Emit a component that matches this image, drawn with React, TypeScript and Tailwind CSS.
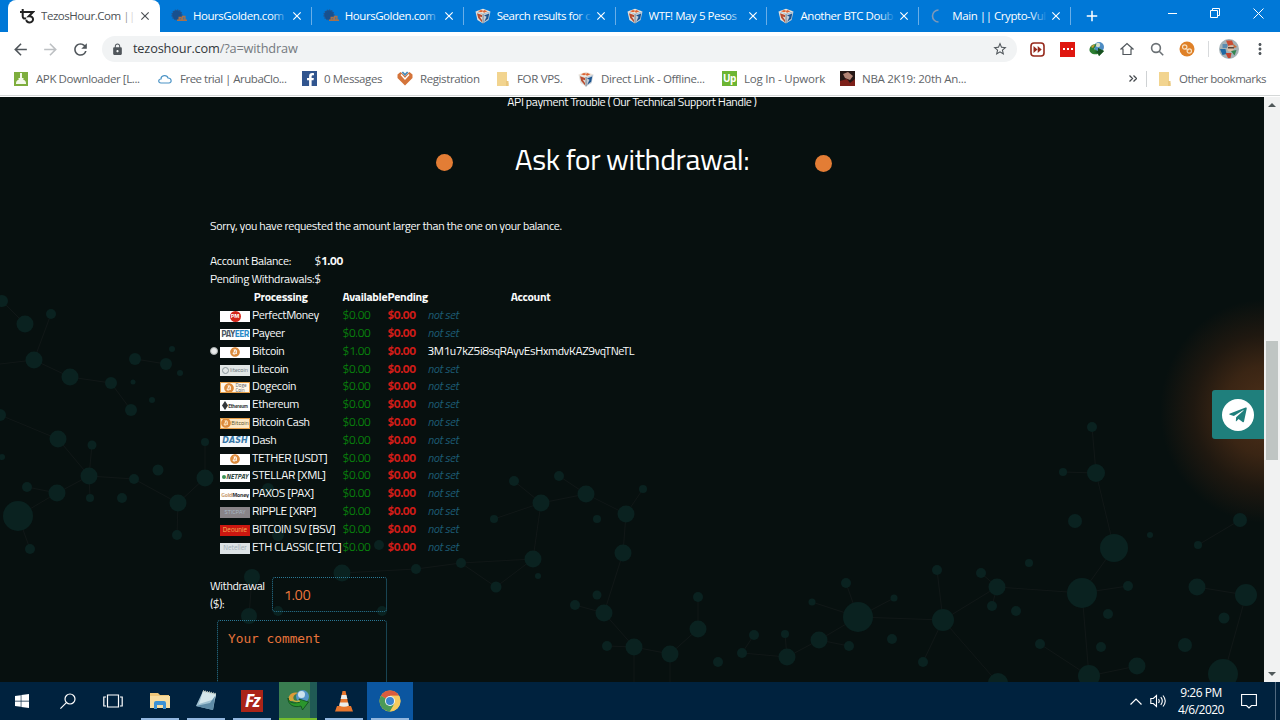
import React from 'react';
import { MdArrowBack, MdArrowForward, MdRefresh, MdLock, MdStarBorder, MdMoreVert, MdClose, MdAdd } from 'react-icons/md';
import { FaFacebookF, FaTelegramPlane, FaBitcoin, FaWindows } from 'react-icons/fa';

type TabKind = 'tezos' | 'golden' | 'cube' | 'spinner';

const tabs: { title: string; kind: TabKind }[] = [
  { title: 'TezosHour.Com ||', kind: 'tezos' },
  { title: 'HoursGolden.com', kind: 'golden' },
  { title: 'HoursGolden.com', kind: 'golden' },
  { title: 'Search results for c', kind: 'cube' },
  { title: 'WTF! May 5 Pesos', kind: 'cube' },
  { title: 'Another BTC Doub', kind: 'cube' },
  { title: 'Main || Crypto-Vul', kind: 'spinner' },
];

const CubeIcon = ({ size = 16 }: { size?: number }) => (
  <svg width={size} height={size} viewBox="0 0 16 16">
    <path d="M.5 3.5 8 .8l7.500 2.700L8 6z" fill="#efe4d8" />
    <path d="M3 3.2 6 2l3 1-3 1.300zM9 2l3.500 1.200L9 4.800 8 4z" fill="#dd6434" />
    <path d="M.5 3.5 8 6v9.5L2.4 12z" fill="#e2e0db" />
    <path d="M15.5 3.5 8 6v9.5l5.6-3.5z" fill="#c3ccd6" />
    <path d="M2 5.2 7 7.1v2.2L4.600 8.6 7 12v2.2L3.200 10z" fill="#b84c30" />
    <path d="m9 7.6 5.2-2.2-1 5.4-4 3 2.4-5z" fill="#1c5590" />
    <path d="M8 6v9.5" stroke="#3c4654" strokeWidth=".6" fill="none" />
  </svg>
);

const TabIcon = ({ kind }: { kind: TabKind }) => {
  if (kind === 'cube') return <CubeIcon />;
  if (kind === 'tezos') {
    return (
      <svg width="16" height="16" viewBox="0 0 16 16" fill="none" stroke="#222" strokeWidth="2">
        <path d="M1 4h5.5M3.7 1v7.3c0 2 1.4 2.6 3.3 1.8M6.5 4H14L9.8 8.2c5.6-.6 5.4 6.4.8 6.2-2 0-3.4-1.1-3.2-2.8" />
      </svg>
    );
  }
  if (kind === 'golden') {
    return (
      <svg width="16" height="16" viewBox="0 0 16 16">
        <circle cx="6" cy="7" r="4.8" fill="#17508f" stroke="#24538c" strokeWidth="1.6" strokeDasharray="1.2 1" />
        <path d="M8.2 12V9.5h2V12m1.5 0V8.5h2.2V12M6 12.3h10" stroke="#a8714a" strokeWidth="1.4" fill="none" />
      </svg>
    );
  }
  return (
    <svg width="16" height="16" viewBox="0 0 16 16" fill="none">
      <path d="M8.5 2a6 6 0 0 0 0 12" stroke="#7f99b8" strokeWidth="1.6" />
    </svg>
  );
};

const TabStrip = () => (
  <div className="flex h-8 bg-[#0078d7] pl-2 text-[11.5px]">
    {tabs.map((tab, i) => {
      const active = i === 0;
      return (
        <div
          key={i}
          className={`relative flex w-[151.9px] items-center pl-[11px] ${active ? 'rounded-t-lg bg-white text-[#4b5054]' : 'text-white'}`}
        >
          <TabIcon kind={tab.kind} />
          <div className="relative ml-[6px] w-[95px] overflow-hidden tracking-[-0.45px] whitespace-nowrap">
            {tab.title}
            <div className={`absolute top-0 right-0 h-full w-4 bg-linear-to-r ${active ? 'from-white/0 to-white' : 'from-[#0078d7]/0 to-[#0078d7]'}`} />
          </div>
          <MdClose size={14} className="ml-[2px]" />
          {!active && <div className="absolute right-0 h-[18px] w-px bg-[#69aee8]" />}
        </div>
      );
    })}
    <div className="flex w-[41px] items-center justify-center text-white">
      <MdAdd size={18} />
    </div>
    <div className="ml-auto flex pb-[5px] text-white">
      <div className="flex w-[43px] items-center justify-center"><div className="h-px w-[9px] bg-white" /></div>
      <div className="flex w-[43px] items-center justify-center">
        <svg width="11" height="11" viewBox="0 0 11 11" fill="none" stroke="currentColor">
          <path d="M.5 2.5h7v7h-7zM2.5 2.5v-2h7v7h-2" />
        </svg>
      </div>
      <div className="flex w-[43px] items-center justify-center">
        <svg width="11" height="11" viewBox="0 0 11 11" stroke="currentColor"><path d="m.5.5 10 10m0-10-10 10" /></svg>
      </div>
    </div>
  </div>
);

const Toolbar = () => (
  <div className="flex h-[34px] items-center bg-white pl-[11px] text-[#50565b]">
    <MdArrowBack size={19} />
    <MdArrowForward size={19} className="ml-[11px] text-[#bdc0c3]" />
    <MdRefresh size={19} className="ml-[11px]" />
    <div className="ml-[12px] flex h-[26px] w-[915px] items-center rounded-full bg-[#f1f3f4] pl-[9px] pr-[9px]">
      <MdLock size={13} />
      <div className="ml-[9px] text-[12.75px] tracking-[-0.17px] text-[#33383b]">
        tezoshour.com<span className="text-[#747a7f]">/?a=withdraw</span>
      </div>
      <MdStarBorder size={16} className="ml-auto" />
    </div>
    <div className="flex items-center">
      <svg width="15" height="15" viewBox="0 0 15 15" className="ml-[13px]">
        <rect x="1" y="1" width="13" height="13" rx="3" fill="#fff" stroke="#96291b" strokeWidth="1.6" />
        <path d="m3.5 4 4 3.5-4 3.5zM7.7 4l4 3.5-4 3.5z" fill="#96291b" />
      </svg>
      <div className="ml-[15px] flex h-[15px] w-[15px] items-center justify-center gap-[2px] bg-[#df1710]">
        <div className="h-[2px] w-[2px] bg-white" />
        <div className="h-[2px] w-[2px] bg-white" />
        <div className="h-[2px] w-[2px] bg-white" />
      </div>
      <svg width="16" height="16" viewBox="0 0 16 16" className="ml-[14px]">
        <circle cx="10" cy="6" r="5" fill="#4d8cc4" />
        <circle cx="9" cy="4" r="2.2" fill="#d3dfc9" />
        <path d="M.5 8C1 4 5 2.5 7.5 3.5L5 8l4 2V7l6 3-5 5-1-2C4 14 0 12 .5 8z" fill="#2c7f32" />
        <path d="m9 7 6 3-5 5-1-3-4-1 4-1z" fill="#174f20" />
        <path d="M2 6q1-2.5 4-2.5L4 7z" fill="#c99a35" />
      </svg>
      <svg width="14" height="14" viewBox="0 0 14 14" className="ml-[15px]" fill="none" stroke="currentColor" strokeWidth="1.2">
        <path d="M1 7 7 1.5 13 7h-2v5.5H3V7z" />
      </svg>
      <svg width="14" height="14" viewBox="0 0 14 14" className="ml-[16px]" fill="none" stroke="#6b7175" strokeWidth="1.6">
        <circle cx="6" cy="6" r="4.4" /><path d="m9.2 9.2 4 4" />
      </svg>
      <svg width="16" height="16" viewBox="0 0 16 16" className="ml-[15px]" fill="none" stroke="#f8dfbf" strokeWidth="1.2">
        <circle cx="8" cy="8" r="7.5" fill="#df8128" stroke="none" />
        <circle cx="5.7" cy="6" r="2.2" /><circle cx="10.3" cy="10" r="2.2" /><path d="m6 7.5 4 1.5" />
      </svg>
      <div className="ml-[13px] h-4 w-px bg-[#d8dadc]" />
      <svg width="20" height="20" viewBox="0 0 20 20" className="ml-[10px]">
        <circle cx="10" cy="10" r="10" fill="#a3b1b6" />
        <path d="M3.5 5h5v4h-5z" fill="#5a8bb0" /><path d="M7 1.5h6l1.5 4-5 2z" fill="#c94d33" />
        <path d="M1 10h5.5l1 5-4 1z" fill="#1e69a4" /><circle cx="11.5" cy="9.5" r="3.2" fill="#dcbfa5" />
        <path d="M6.5 14h6l-1 5H9z" fill="#c4432e" /><path d="m12 12 5.5-1-2 5.5z" fill="#338550" /><path d="M9 8h6v1.5H9z" fill="#554239" />
        <path d="M14 4.5 18 8l-3 1z" fill="#c96b3c" />
      </svg>
      <MdMoreVert size={18} className="ml-[12px]" />
    </div>
  </div>
);

const Folder = () => (
  <svg width="13" height="14" viewBox="0 0 13 14">
    <path d="M1 0h10v10l1.5 1v3H1z" fill="#f2d48f" /><path d="M10 9h2.5v5H10z" fill="#e9c67d" />
  </svg>
);

const bookmarks: { label: string; icon: React.ReactNode; at: string }[] = [
  {
    label: 'APK Downloader [L...',
    at: 'w-[144px] gap-[8px] tracking-[-0.4px]',
    icon: (
      <svg width="14" height="14" viewBox="0 0 14 14">
        <path d="M0 0h14v14H0z" fill="#7eae3d" /><path d="M6 1h2v5h2L7 9 4 6h2zM2 11a5 4 0 0 1 10 0v1H2z" fill="#f4f9ea" />
      </svg>
    ),
  },
  {
    label: 'Free trial | ArubaClo...',
    at: 'w-[144px] gap-[8px] tracking-[-0.5px]',
    icon: (
      <svg width="14" height="14" viewBox="0 0 14 14" fill="none" stroke="#4c94c6" strokeWidth="1.2">
        <path d="M3 11C0 11 0 7 3 7c0-4 6-4.5 7-1 4 0 4 5 1 5z" />
      </svg>
    ),
  },
  {
    label: '0 Messages',
    at: 'w-[95px] gap-[7px] tracking-[-0.37px]',
    icon: <div className="flex h-[15px] w-[15px] items-end justify-end bg-[#31558f]"><FaFacebookF size={13} className="text-white" /></div>,
  },
  {
    label: 'Registration',
    at: 'w-[99px] gap-[7px] tracking-[-0.4px]',
    icon: (
      <svg width="16" height="15" viewBox="0 0 16 15">
        <path d="M.5 3.5 3.5 1 8 5l4.500-4 3 2.5V7L8 14.5.5 7z" fill="#d4743a" />
        <path d="M4.500 1.500 6 .5l2 2 2-2 1.500 1L8 5z" fill="#4c8cb9" />
        <path d="m4 3.500 4 4.500 4-4.500" stroke="#fff" strokeWidth="1.400" fill="none" />
      </svg>
    ),
  },
  { label: 'FOR VPS.', icon: <Folder />, at: 'w-[82px] gap-[8px] tracking-[-0.33px]' },
  { label: 'Direct Link - Offline...', icon: <CubeIcon />, at: 'w-[144px] gap-[7px] tracking-[-0.34px]' },
  {
    label: 'Log In - Upwork',
    at: 'w-[118px] gap-[7px] tracking-[-0.2px]',
    icon: <div className="h-[15px] w-[15px] bg-[#6cb533] text-center text-[10px] leading-[14px] font-bold tracking-[-0.5px] text-white">Up</div>,
  },
  {
    label: 'NBA 2K19: 20th An...',
    at: 'w-[140px] gap-[7px] tracking-[-0.28px]',
    icon: (
      <svg width="15" height="15" viewBox="0 0 15 15">
        <path d="M0 0h15v15H0z" fill="#251715" /><path d="m3 3 5-2 5 4-3 4-5-2z" fill="#b28475" /><path d="m0 10 7-2 3 4 5-4v7H0z" fill="#7d2019" />
      </svg>
    ),
  },
];

const BookmarksBar = () => (
  <div className="flex h-[30px] items-center border-b border-[#d5d8d8] bg-white pb-[4px] pl-[14px] text-[11.5px] whitespace-nowrap text-[#5f6569]">
    {bookmarks.map(b => (
      <div key={b.label} className={`flex shrink-0 items-center ${b.at}`}>
        <div className="shrink-0">{b.icon}</div>
        <span>{b.label}</span>
      </div>
    ))}
    <svg width="8" height="7" viewBox="0 0 8 7" className="ml-auto" fill="none" stroke="#454a4e" strokeWidth="1.3"><path d="m.5.5 3 3-3 3m4-6 3 3-3 3" /></svg>
    <div className="ml-[9px] h-4 w-px bg-[#cfd2d4]" />
    <div className="ml-[11px]"><Folder /></div>
    <span className="mr-[13px] ml-[8px] w-[88px] tracking-[-0.5px]">Other bookmarks</span>
  </div>
);

// [x, y, radius], in page area coordinates
const nodes: [number, number, number][] = [
  [2, 204, 6], [25, 227, 8.5], [51, 217, 5], [34, 263, 8.5], [70, 280, 8.5], [111, 286, 6], [135, 262, 6], [166, 267, 6],
  [172, 252, 3], [180, 276, 3], [133, 285, 2.5], [131, 313, 6], [152, 303, 3], [0, 318, 6], [58, 342, 8.5], [92, 348, 4.5],
  [2, 360, 3], [27, 390, 5], [57, 396, 8.5], [89, 379, 8.5], [134, 382, 5], [158, 373, 5.5], [90, 401, 4], [122, 401, 5],
  [18, 419, 15], [30, 452, 5], [178, 406, 8.5], [177, 438, 5], [205, 381, 8.5], [205, 345, 4], [268, 392, 6], [278, 438, 6],
  [379, 448, 5], [252, 480, 8], [342, 476, 8.5], [249, 519, 8], [416, 472, 5], [278, 514, 5], [382, 514, 5],
  [514, 384, 5], [559, 379, 5], [541, 406, 8.5], [586, 397, 8.5], [494, 422, 4], [643, 392, 4], [626, 417, 8.5], [597, 422, 4],
  [623, 456, 8.5], [533, 462, 8.5], [538, 479, 3], [496, 490, 5.5], [461, 466, 5], [597, 498, 4.5], [575, 508, 5], [604, 516, 8.5],
  [698, 500, 5], [698, 532, 8.5], [607, 549, 5], [634, 550, 8.5], [670, 557, 8.5], [718, 565, 5], [742, 556, 5], [754, 538, 5],
  [785, 537, 4], [787, 560, 8.5], [819, 543, 8.5], [812, 505, 3.5], [858, 520, 15], [846, 486, 5], [894, 501, 3.5], [892, 542, 5],
  [849, 549, 5], [943, 523, 11], [937, 473, 5], [923, 565, 5], [981, 476, 5], [997, 490, 8.5], [992, 509, 5], [1016, 514, 5],
  [998, 586, 10], [1082, 496, 15], [1128, 489, 5], [1108, 517, 5], [1040, 547, 5], [1101, 550, 5], [1137, 569, 8.5], [1089, 579, 11],
  [1197, 490, 8.5], [1246, 498, 11], [1224, 521, 5.5], [1185, 548, 7], [1223, 577, 15], [1029, 466, 4], [1114, 451, 14],
  [1092, 330, 5], [1096, 376, 9], [1063, 375, 4], [1075, 424, 7], [1150, 438, 3], [1198, 448, 4], [1240, 423, 7],
];

const NetworkBackdrop = () => (
  <svg className="absolute inset-0" width="1264" height="585" viewBox="0 0 1264 585">
    <path
      d="M2 204 25 227M51 217 34 263 70 280 111 286 131 313M0 267 34 263M135 262 166 267M0 318 58 342 89 379 57 396 27 390M92 348 89 379 90 401M89 379 134 382 178 406 177 438M57 396 18 419 30 452M178 406 205 381V345M252 480 249 519M342 476 416 472 461 466 533 462 541 406 586 397 626 417 623 456 604 516 634 550 670 557 698 532V500M514 384 541 406 494 422M559 379 586 397M643 392 626 417M496 490 533 462M461 466 496 490M575 508 604 516M607 549 634 550V585M670 557V585M754 538 742 556 787 560 819 543 858 520 943 523 937 473M785 537 787 560M812 505 858 520 846 486M894 501 858 520M819 543 849 549M923 565 943 523 998 586M943 523 997 490 981 476M992 509 997 490 1082 496 1114 451 1096 376 1092 330M1063 375 1096 376M1128 489 1082 496 1089 579 1137 569M1040 547 1089 579M1197 490 1246 498 1224 577M1198 448 1240 423"
      fill="none"
      stroke="#171d1c"
      strokeWidth="0.6"
    />
    {nodes.map(([x, y, r], i) => <circle key={i} cx={x} cy={y} r={r} fill="#0a2220" />)}
  </svg>
);

const coin = <FaBitcoin size={10} className="shrink-0 text-[#dc8b3c]" />;

const methods: { name: string; badge: React.ReactNode; box: string; available?: string; account?: string }[] = [
  { name: 'PerfectMoney', box: 'bg-white', badge: <div className="h-[11px] w-[11px] rounded-full bg-[#d4261a] text-center text-[6px] leading-[10px] font-bold text-white">PM</div> },
  { name: 'Payeer', box: 'bg-white text-[9px] font-bold tracking-[-0.5px]', badge: <span className="text-[#4a5563]">PAY<span className="text-[#2789c8]">EER</span></span> },
  { name: 'Bitcoin', box: 'bg-white', badge: coin, available: '$1.00', account: '3M1u7kZ5i8sqRAyvEsHxmdvKAZ9vqTNeTL' },
  {
    name: 'Litecoin',
    box: 'bg-[#e1e6e5] gap-px text-[6px] text-[#727d82]',
    badge: <><div className="h-[7px] w-[7px] shrink-0 rounded-full border border-[#8a969a]" /><span>litecoin</span></>,
  },
  {
    name: 'Dogecoin',
    box: 'bg-[#fff6e9] border border-[#e7a04a] gap-[2px] text-[5px] text-[#62676b]',
    badge: <>{coin}<div className="flex flex-col leading-[5px]"><span>Doge</span><span>Coin</span></div></>,
  },
  { name: 'Ethereum', box: 'bg-white text-[5px] font-bold tracking-[-0.2px] text-[#393d40]', badge: <><svg width="6" height="9" viewBox="0 0 6 9"><path d="m3 0 3 4.5L3 9 0 4.5z" fill="#33373b" /></svg><span>Ethereum</span></> },
  { name: 'Bitcoin Cash', box: 'bg-[#fce8c6] border border-[#e7a04a] text-[6px] text-[#62552f]', badge: <>{coin}<span>Bitcoin</span></> },
  { name: 'Dash', box: "bg-[#f4f8fa] font-['DejaVu_Sans'] text-[8px] font-bold italic text-[#3476a8]", badge: 'DASH' },
  { name: 'TETHER [USDT]', box: 'bg-white', badge: coin },
  {
    name: 'STELLAR [XML]',
    box: 'bg-white text-[7px] font-bold italic text-[#344b43]',
    badge: <><div className="h-[4px] w-[4px] shrink-0 rounded-full bg-[#3a9354]" />NETPAY</>,
  },
  { name: 'PAXOS [PAX]', box: 'bg-white text-[6px] font-bold tracking-[-0.2px] text-[#35383b]', badge: <><span className="text-[#caa174]">Gold</span>Money</> },
  { name: 'RIPPLE [XRP]', box: 'bg-[#888488] text-[6px] text-[#a8bac7]', badge: 'STICPAY' },
  { name: 'BITCOIN SV [BSV]', box: 'bg-[#cc1710] text-[7px] text-[#f4b45c]', badge: 'Deounie' },
  { name: 'ETH CLASSIC [ETC]', box: 'bg-[#dce3e5] text-[7px] text-[#a1afb6]', badge: 'Neteller' },
];

const grid = 'grid h-[17.8px] grid-cols-[9px_33px_90.5px_45px_40px_206px] items-center whitespace-nowrap';

const WithdrawTable = () => (
  <div className="mt-[0.4px] w-[424px]">
    <div className={`${grid} font-bold tracking-[-0.3px]`}>
      <div />
      <div className="col-span-2 text-center">Processing</div>
      <div>Available</div>
      <div>Pending</div>
      <div className="text-center">Account</div>
    </div>
    {methods.map(m => (
      <div key={m.name} className={grid}>
        <div>{m.account && <div className="h-[8px] w-[8px] rounded-full border border-[#aab0b0] bg-[#e8eaea]" />}</div>
        <div className={`mt-[3px] ml-[1px] flex h-[11px] w-[30px] items-center justify-center overflow-hidden ${m.box}`}>{m.badge}</div>
        <div className="tracking-[-0.36px]">{m.name}</div>
        <div className="tracking-[-0.3px] text-[#08800c]">{m.available || '$0.00'}</div>
        <div className="font-bold tracking-[-0.4px] text-[#d01c18]">$0.00</div>
        <div className={m.account ? 'tracking-[-0.39px]' : 'tracking-[-0.3px] text-[#1d5c75] italic'}>{m.account || 'not set'}</div>
      </div>
    ))}
  </div>
);

const WithdrawPage = () => (
  <div className="relative flex-1 overflow-hidden bg-[#07100f] font-['Titillium_Web','Roboto',sans-serif] text-[12px] leading-[18px] text-[#f8fafa]">
    <div className="absolute -right-[108px] top-[202px] h-[224px] w-[212px] rounded-full bg-[radial-gradient(closest-side,#4e3019_0%,#3a2514_40%,#1f1810_68%,#07100f_100%)]" />
    <NetworkBackdrop />
    <div className="relative -mt-1 flex flex-col">
      <p className="text-center tracking-[-0.34px]">API payment Trouble ( Our Technical Support Handle )</p>
      <div className="mt-[25px] flex h-[46px] items-center justify-center pl-[4px]">
        <div className="mt-[6px] h-[17px] w-[17px] rounded-full bg-[#e37d35]" />
        <h1 className="w-[362px] pr-[4px] text-center text-[30px] leading-[46px] tracking-[-0.5px] text-white">Ask for withdrawal:</h1>
        <div className="mt-[9px] h-[17px] w-[17px] rounded-full bg-[#e37d35]" />
      </div>
      <div className="mt-[35px] pl-[210px]">
        <p className="tracking-[-0.32px]">Sorry, you have requested the amount larger than the one on your balance.</p>
        <div className="mt-[17px] flex tracking-[-0.3px]">
          <span className="w-[104.5px]">Account Balance:</span>
          <span>$<b>1.00</b></span>
        </div>
        <p className="tracking-[-0.3px]">Pending Withdrawals:$</p>
        <WithdrawTable />
        <div className="mt-[21.6px] flex">
          <div className="w-[62px] tracking-[-0.36px]">Withdrawal<br />($):</div>
          <input
            defaultValue="1.00"
            className="h-[35px] w-[115px] rounded-[3px] border border-dotted border-[#2a7896] bg-transparent px-[11px] text-[14px] text-[#f07a3e] outline-none"
          />
        </div>
        <textarea
          placeholder="Your comment"
          className="mt-[7px] ml-[7px] block h-[90px] w-[170px] resize-none rounded-[3px] border border-dotted border-[#2a7896] bg-transparent px-[10px] py-[9px] font-['DejaVu_Sans_Mono',monospace] text-[12.8px] outline-none placeholder:text-[#e8743b]"
        />
      </div>
    </div>
    <div className="absolute top-[293px] right-0 flex h-[49px] w-[52px] items-center justify-center rounded-l-[3px] bg-[#1f7f7c]">
      <div className="flex h-8 w-8 items-center justify-center rounded-full bg-white">
        <FaTelegramPlane size={20} className="text-[#1f7f7c]" />
      </div>
    </div>
  </div>
);

const Scrollbar = () => (
  <div className="flex w-4 flex-col items-center bg-[#f1f2f2]">
    <svg width="8" height="4" viewBox="0 0 8 4" className="mt-[6px]"><path d="M0 4h8L4 0z" fill="#50595a" /></svg>
    <div className="mt-[234px] h-[119px] w-3 bg-[#bfc5c3]" />
    <svg width="8" height="4" viewBox="0 0 8 4" className="mt-auto mb-[6px]"><path d="M0 0h8L4 4z" fill="#50595a" /></svg>
  </div>
);

const ExplorerIcon = () => (
  <svg width="22" height="20" viewBox="0 0 22 20">
    <path d="M1 2h8l2 2h9v13H1z" fill="#efc77a" /><path d="M1 5h20v12H1z" fill="#f8dda0" />
    <path d="M5 18v-6q0-2 2-2h8q2 0 2 2v6h-3v-4H8v4z" fill="#3c91d5" />
  </svg>
);

const NotepadIcon = () => (
  <svg width="22" height="22" viewBox="0 0 22 22">
    <path d="m8 1 13 3-3 16-17-4z" fill="#9fc1d1" /><path d="m8 1 13 3-1 5L4 14z" fill="#d5e7ec" /><path d="m1 16 14-3 5-7-2 14z" fill="#5e8ba6" />
    <path d="m8 1 13 3" stroke="#c2c9bd" strokeWidth="2" strokeDasharray="1 1" />
  </svg>
);

const IdmIcon = () => (
  <svg width="23" height="23" viewBox="0 0 23 23">
    <circle cx="15.5" cy="7.5" r="6.5" fill="#5394c8" /><circle cx="14.5" cy="5.5" r="3.5" fill="#cce2ed" />
    <path d="M2 12C0 7 5 2 11 4 6 6 5 9 8 12z" fill="#dc9a38" />
    <path d="M1 9c1 5 6 6 12 4l-1-3 9.5 3-6 8-1.5-4C7 19 1 16 1 9z" fill="#2b962c" stroke="#0d4d1a" strokeWidth=".8" />
    <path d="M3 8c2 4 6 5 10 4" stroke="#c2b33e" strokeWidth="1.5" fill="none" />
  </svg>
);

const VlcIcon = () => (
  <svg width="20" height="22" viewBox="0 0 20 22">
    <path d="M3 16h14l2 5.5H1z" fill="#e8772e" /><path d="M8.5 1h3L15 17q-5 3-10 0z" fill="#e8772e" />
    <path d="M7.6 5h4.8l1 4H6.7zM5.9 12.5h8.2l.7 3.2q-4.8 2-9.6 0z" fill="#eceeec" />
  </svg>
);

const ChromeIcon = () => (
  <svg width="22" height="22" viewBox="0 0 22 22">
    <circle cx="11" cy="11" r="10.5" fill="#f3c64a" />
    <path d="M11 11 1.9 5.8A10.5 10.5 0 0 1 20.1 5.8H11z" fill="#d95c3e" />
    <path d="M11 11 1.9 5.8A10.5 10.5 0 0 0 11 21.5l4.5-7.8z" fill="#4b9a58" />
    <path d="M11 5.8h9.1A10.5 10.5 0 0 1 11 21.5l4.5-7.8z" fill="#f4cb60" />
    <circle cx="11" cy="11" r="5" fill="#f2f4f2" /><circle cx="11" cy="11" r="4" fill="#3984d0" />
  </svg>
);

const taskApps: { icon: React.ReactNode; tile: string; line: string }[] = [
  { icon: <ExplorerIcon />, tile: 'w-[38px]', line: 'bg-[#92b7df]' },
  { icon: <NotepadIcon />, tile: 'w-[38px]', line: 'bg-[#92b7df]' },
  {
    icon: <div className="flex h-[22px] w-[22px] items-center justify-center bg-[#aa2418] text-[17px] font-bold tracking-[-1.5px] text-white italic">Fz</div>,
    tile: 'w-[38px]',
    line: 'bg-[#92b7df]',
  },
  { icon: <IdmIcon />, tile: 'w-[38px] bg-linear-to-r from-[#397d50] from-82% to-[#205a54] to-82%', line: 'bg-[#75bd2e]' },
  { icon: <VlcIcon />, tile: 'w-[38px]', line: 'bg-[#92b7df]' },
  { icon: <ChromeIcon />, tile: 'w-[46px] bg-[#0b56a0]', line: 'bg-[#92b7df]' },
];

const Taskbar = () => (
  <div className="flex h-[38px] shrink-0 bg-[#00223e] text-[12px] text-white">
    <div className="flex w-[44px] items-center justify-center"><FaWindows size={16} /></div>
    <div className="flex w-[47px] items-center justify-center">
      <svg width="16" height="16" viewBox="0 0 16 16" fill="none" stroke="currentColor" strokeWidth="1.2"><circle cx="10" cy="6" r="5" /><path d="m6.4 9.6-6 6" /></svg>
    </div>
    <div className="flex w-[44px] items-center justify-center">
      <svg width="20" height="14" viewBox="0 0 20 14" fill="none" stroke="currentColor" strokeWidth="1.2"><path d="M4.5 1h11v12h-11zM3 3H.8v9H3M17 3h2.2v9H17" /></svg>
    </div>
    {taskApps.map((app, i) => (
      <div key={i} className={`flex justify-center ${i === 0 ? 'ml-[2px]' : ''} w-[46px]`}>
        <div className={`flex flex-col items-center ${app.tile}`}>
          <div className="flex flex-1 items-center pt-px">{app.icon}</div>
          <div className={`h-[2px] w-[38px] ${app.line}`} />
        </div>
      </div>
    ))}
    <div className="ml-auto flex items-center">
      <svg width="12" height="7" viewBox="0 0 12 7" fill="none" stroke="currentColor" strokeWidth="1.2"><path d="m.5 6.5 5.5-5.5 5.5 5.5" /></svg>
      <svg width="17" height="14" viewBox="0 0 17 14" className="ml-[8px]" fill="none" stroke="currentColor" strokeWidth="1.1">
        <path d="M.8 4.5h2.5L6.5 1.5v11L3.3 9.5H.8zM8.5 5q1.5 2 0 4M10.8 3.2q3 3.8 0 7.6M13 1.5q4.5 5.5 0 11" />
      </svg>
      <div className="ml-[7px] w-[54px] text-center leading-[17px] tracking-[-0.5px] whitespace-nowrap">9:26 PM<br />4/6/2020</div>
      <svg width="16" height="16" viewBox="0 0 16 16" className="mr-[18px] ml-[13px]" fill="none" stroke="currentColor" strokeWidth="1.1"><path d="M.6 1.5h14.8v11h-4.9L8 15l-2.500-2.500H.6z" /></svg>
      <div className="mr-[4px] h-[38px] w-px bg-[#50697f]" />
    </div>
  </div>
);

export default function App() {
  return (
    <div className="flex h-[720px] w-[1280px] flex-col overflow-hidden bg-white font-['Segoe_UI','Open_Sans',sans-serif]">
      <TabStrip />
      <Toolbar />
      <BookmarksBar />
      <div className="mt-px flex min-h-0 flex-1">
        <WithdrawPage />
        <Scrollbar />
      </div>
      <Taskbar />
    </div>
  );
}
